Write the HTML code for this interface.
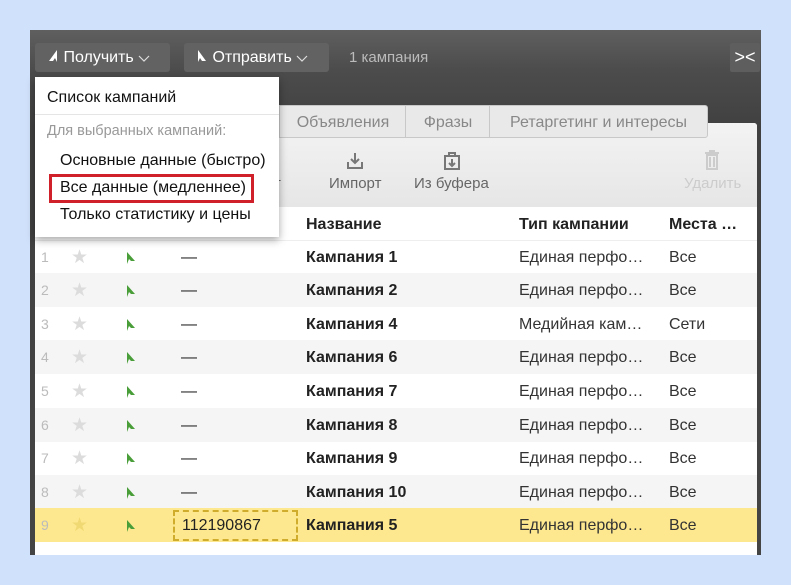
<!DOCTYPE html>
<html><head><meta charset="utf-8"><style>
*{margin:0;padding:0;box-sizing:border-box}
body{width:791px;height:585px;background:#d0e1fb;font-family:"Liberation Sans",Arial,sans-serif;position:relative;overflow:hidden}
.abs{position:absolute}
.panel{left:30px;top:30px;width:731px;height:525px;background:linear-gradient(#5f5f5f,#4c4c4c 40px,#404040 100px,#444);}
.btn{top:43px;height:29px;background:#626262;border-radius:3px;color:#fff;font-size:16px;line-height:29px;padding-left:12px}
.content{left:35px;top:123px;width:722px;height:432px;background:#fff;border-radius:3px 3px 0 0}
.tb{left:35px;top:123px;width:722px;height:84px;background:linear-gradient(#f3f3f3,#e6e6e6);border-radius:3px 3px 0 0}
.tab{top:105px;height:33px;background:#e9e9e9;border:1px solid #c8c8c8;color:#888;font-size:16px;line-height:33px;text-align:center}
.row{left:35px;width:722px;height:34px;font-size:16px;line-height:35px;color:#222}
.row.g{background:#f5f5f5}
.row span{position:absolute}
.n{left:6px;color:#bbb;font-size:14px}
.st{left:36px;color:#dcdcdc;font-size:19px}
.ic{left:91px;top:12px}
.d{left:146px;color:#222}
.nm{left:271px;font-weight:bold}
.tp{left:484px;color:#333}
.pl{left:634px;color:#333}
.menu{left:35px;top:77px;width:244px;height:160px;background:#fff;box-shadow:0 3px 8px rgba(0,0,0,.35);font-size:16px;color:#111}
</style></head><body>
<div class="abs panel"></div>
<div class="abs btn" style="left:35px;width:135px"><svg width="12" height="14" style="vertical-align:-1px"><path d="M10 1L2 12H6L8 9L10 13Z" fill="#fff"/></svg> Получить <svg width="12" height="8"><path d="M1 2L6 7L11 2" stroke="#ddd" fill="none" stroke-width="1.2"/></svg></div>
<div class="abs btn" style="left:184px;width:145px"><svg width="12" height="14" style="vertical-align:-1px"><path d="M2 1L10 12H6L4 9L2 13Z" fill="#fff"/></svg> Отправить <svg width="12" height="8"><path d="M1 2L6 7L11 2" stroke="#ddd" fill="none" stroke-width="1.2"/></svg></div>
<div class="abs" style="left:349px;top:43px;line-height:29px;color:#bbb;font-size:15px">1 кампания</div>
<div class="abs" style="left:730px;top:43px;width:30px;height:29px;background:#5e5e5e;border-radius:2px;color:#fff;font-size:18px;line-height:29px;text-align:center">&gt;&lt;</div>
<div class="abs content"></div>
<div class="abs tb"></div>
<div class="abs tab" style="left:279px;width:127px;border-right:none">Объявления</div>
<div class="abs tab" style="left:405px;width:85px;border-right:none">Фразы</div>
<div class="abs tab" style="left:489px;width:219px;border-radius:0 3px 3px 0">Ретаргетинг и интересы</div>
<div class="abs" style="left:266px;top:175px;color:#666;font-size:15px">рт</div>
<svg class="abs" style="left:345px;top:151px" width="20" height="20"><path d="M10 2V12M6 8L10 12L14 8M3 11V17H17V11" stroke="#777" stroke-width="2" fill="none"/></svg>
<div class="abs" style="left:329px;top:175px;color:#666;font-size:15px">Импорт</div>
<svg class="abs" style="left:442px;top:151px" width="20" height="20"><path d="M3 5H17V18H3ZM7 2H13V5H7ZM10 8V15M7 12L10 15L13 12" stroke="#777" stroke-width="2" fill="none"/></svg>
<div class="abs" style="left:414px;top:175px;color:#666;font-size:15px">Из буфера</div>
<svg class="abs" style="left:704px;top:150px" width="16" height="20"><path d="M1 3H15M5 1H11M3 5H13V19H3ZM6 7V17M10 7V17" stroke="#ccc" stroke-width="2" fill="none"/></svg>
<div class="abs" style="left:684px;top:175px;color:#ccc;font-size:15px">Удалить</div>
<div class="abs row" style="top:207px;font-weight:bold;border-bottom:1px solid #eee"><span style="left:271px">Название</span><span style="left:484px">Тип кампании</span><span style="left:634px">Места …</span></div>
<div class="abs row" style="top:240px"><span class="n">1</span><span class="st">★</span><svg class="abs ic" width="10" height="12"><path d="M1 0L9 9H5L3 7L1 12Z" fill="#4a9e3a"/></svg><span class="d">—</span><span class="nm">Кампания 1</span><span class="tp">Единая перфо…</span><span class="pl">Все</span></div>
<div class="abs row g" style="top:273px"><span class="n">2</span><span class="st">★</span><svg class="abs ic" width="10" height="12"><path d="M1 0L9 9H5L3 7L1 12Z" fill="#4a9e3a"/></svg><span class="d">—</span><span class="nm">Кампания 2</span><span class="tp">Единая перфо…</span><span class="pl">Все</span></div>
<div class="abs row" style="top:307px"><span class="n">3</span><span class="st">★</span><svg class="abs ic" width="10" height="12"><path d="M1 0L9 9H5L3 7L1 12Z" fill="#4a9e3a"/></svg><span class="d">—</span><span class="nm">Кампания 4</span><span class="tp">Медийная кам…</span><span class="pl">Сети</span></div>
<div class="abs row g" style="top:340px"><span class="n">4</span><span class="st">★</span><svg class="abs ic" width="10" height="12"><path d="M1 0L9 9H5L3 7L1 12Z" fill="#4a9e3a"/></svg><span class="d">—</span><span class="nm">Кампания 6</span><span class="tp">Единая перфо…</span><span class="pl">Все</span></div>
<div class="abs row" style="top:374px"><span class="n">5</span><span class="st">★</span><svg class="abs ic" width="10" height="12"><path d="M1 0L9 9H5L3 7L1 12Z" fill="#4a9e3a"/></svg><span class="d">—</span><span class="nm">Кампания 7</span><span class="tp">Единая перфо…</span><span class="pl">Все</span></div>
<div class="abs row g" style="top:408px"><span class="n">6</span><span class="st">★</span><svg class="abs ic" width="10" height="12"><path d="M1 0L9 9H5L3 7L1 12Z" fill="#4a9e3a"/></svg><span class="d">—</span><span class="nm">Кампания 8</span><span class="tp">Единая перфо…</span><span class="pl">Все</span></div>
<div class="abs row" style="top:441px"><span class="n">7</span><span class="st">★</span><svg class="abs ic" width="10" height="12"><path d="M1 0L9 9H5L3 7L1 12Z" fill="#4a9e3a"/></svg><span class="d">—</span><span class="nm">Кампания 9</span><span class="tp">Единая перфо…</span><span class="pl">Все</span></div>
<div class="abs row g" style="top:475px"><span class="n">8</span><span class="st">★</span><svg class="abs ic" width="10" height="12"><path d="M1 0L9 9H5L3 7L1 12Z" fill="#4a9e3a"/></svg><span class="d">—</span><span class="nm">Кампания 10</span><span class="tp">Единая перфо…</span><span class="pl">Все</span></div>
<div class="abs row" style="top:508px;background:#fde88f"><span class="n">9</span><span class="st" style="color:#f0d873">★</span><svg class="abs ic" width="10" height="12"><path d="M1 0L9 9H5L3 7L1 12Z" fill="#4a9e3a"/></svg><span style="left:138px;top:2px;width:125px;height:31px;border:2px dashed #d0ac2c;line-height:27px;padding-left:7px">112190867</span><span class="nm">Кампания 5</span><span class="tp">Единая перфо…</span><span class="pl">Все</span></div>
<div class="abs menu">
<div class="abs" style="left:12px;top:12px">Список кампаний</div>
<div class="abs" style="left:0;top:37px;width:244px;border-top:1px solid #e5e5e5"></div>
<div class="abs" style="left:12px;top:46px;color:#999;font-size:14.5px">Для выбранных кампаний:</div>
<div class="abs" style="left:25px;top:75px">Основные данные (быстро)</div>
<div class="abs" style="left:14px;top:97px;width:205px;height:29px;border:3px solid #d0202a"></div>
<div class="abs" style="left:25px;top:102px">Все данные (медленнее)</div>
<div class="abs" style="left:25px;top:129px">Только статистику и цены</div>
</div>
</body></html>
